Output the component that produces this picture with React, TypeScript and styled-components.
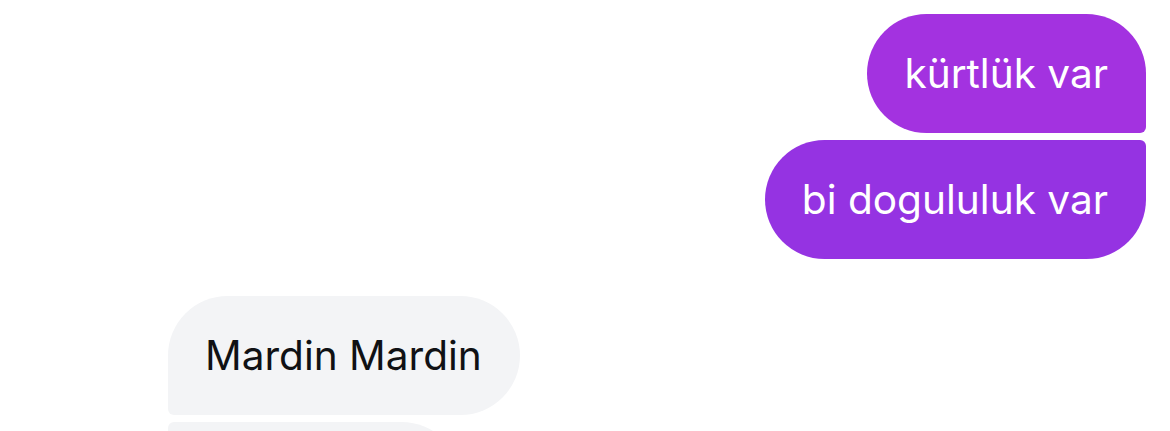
import React from 'react';
import styled, { createGlobalStyle } from 'styled-components';

const GlobalStyle = createGlobalStyle`
  html, body {
    margin: 0;
    padding: 0;
    background: #ffffff;
    overflow: hidden;
  }
  body {
    font-family: Inter, "Noto Sans", "Liberation Sans", sans-serif;
  }
`;

type Side = 'in' | 'out';
type Pos = 'first' | 'last' | 'middle' | 'single';

interface Message {
  text: string;
  color?: string;
}

interface Group {
  side: Side;
  messages: Message[];
}

const Thread = styled.div`
  width: 1170px;
  height: 431px;
  overflow: hidden;
  box-sizing: border-box;
  padding: 14px 24px 0 168px;
  display: flex;
  flex-direction: column;
  gap: 37px;
`;

const GroupCol = styled.div<{ $side: Side }>`
  display: flex;
  flex-direction: column;
  gap: 7px;
  align-items: ${(p) => (p.$side === 'out' ? 'flex-end' : 'flex-start')};
`;

const BIG = 60;
const SMALL = 6;

const radius = (side: Side, pos: Pos) => {
  // top-left, top-right, bottom-right, bottom-left
  const topInner = pos === 'middle' || pos === 'last' ? SMALL : BIG;
  const bottomInner = pos === 'middle' || pos === 'first' ? SMALL : BIG;
  if (side === 'out') return `${BIG}px ${topInner}px ${bottomInner}px ${BIG}px`;
  return `${topInner}px ${BIG}px ${BIG}px ${bottomInner}px`;
};

const Bubble = styled.div<{ $side: Side; $pos: Pos; $bg?: string }>`
  height: 119px;
  flex-shrink: 0;
  box-sizing: border-box;
  padding: 0 38px 0 37px;
  display: flex;
  align-items: center;
  font-size: 40.6px;
  white-space: nowrap;
  border-radius: ${(p) => radius(p.$side, p.$pos)};
  background: ${(p) => p.$bg ?? (p.$side === 'out' ? '#a030e0' : '#f3f4f6')};
  color: ${(p) => (p.$side === 'out' ? '#ffffff' : '#101114')};
`;

const groups: Group[] = [
  {
    side: 'out',
    messages: [
      { text: 'kürtlük var', color: '#a332e0' },
      { text: 'bi dogululuk var', color: '#9533e2' },
    ],
  },
  {
    side: 'in',
    messages: [{ text: 'Mardin Mardin' }, { text: 'Midyatlıyım' }],
  },
];

const posOf = (i: number, n: number): Pos => {
  if (n === 1) return 'single';
  if (i === 0) return 'first';
  if (i === n - 1) return 'last';
  return 'middle';
};

export default function App() {
  return (
    <>
      <GlobalStyle />
      <Thread>
        {groups.map((g, gi) => (
          <GroupCol key={gi} $side={g.side}>
            {g.messages.map((m, i) => (
              <Bubble key={i} $side={g.side} $pos={posOf(i, g.messages.length)} $bg={m.color}>
                {m.text}
              </Bubble>
            ))}
          </GroupCol>
        ))}
      </Thread>
    </>
  );
}
